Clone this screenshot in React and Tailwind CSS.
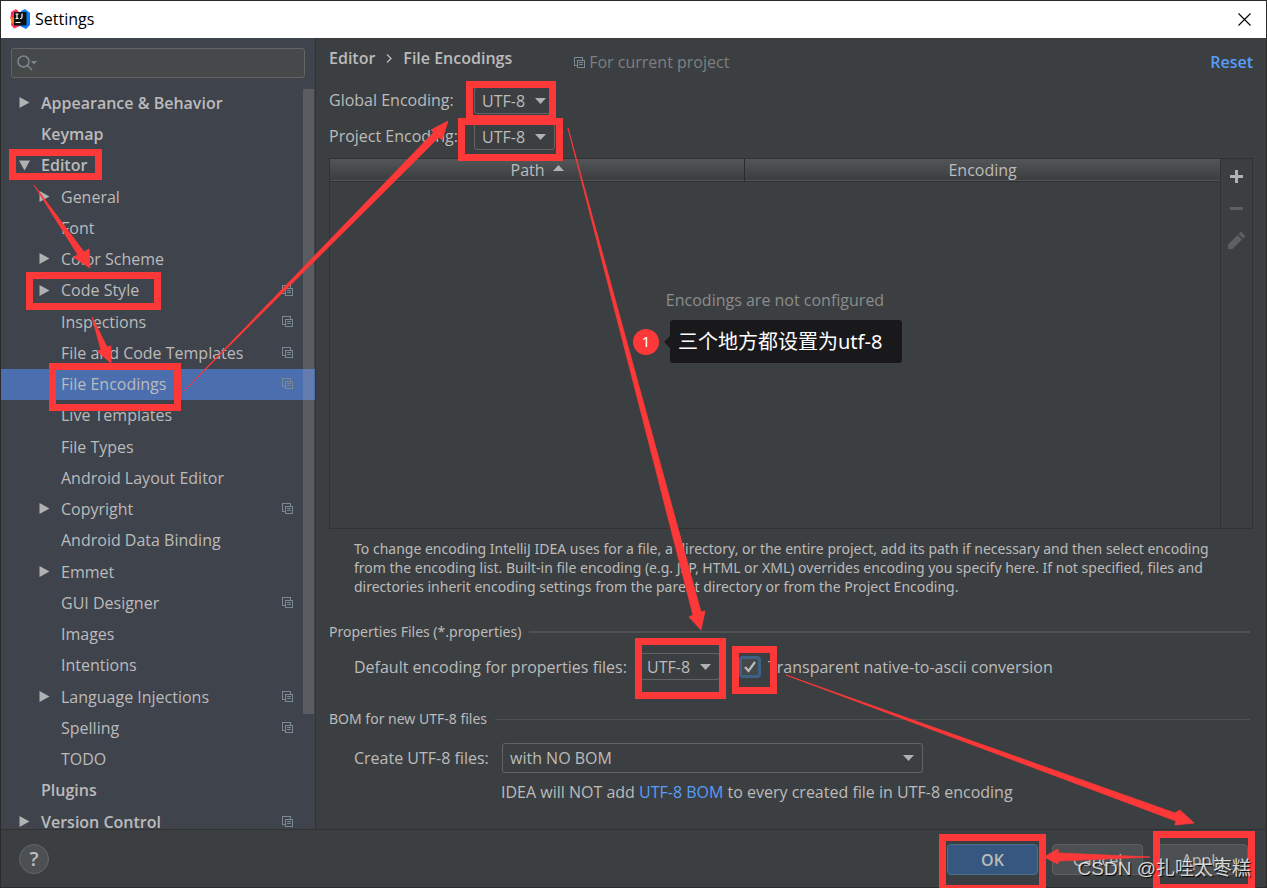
const tree = [
  { label: 'Appearance & Behavior', top: true, arrow: 'right' },
  { label: 'Keymap', top: true },
  { label: 'Editor', top: true, arrow: 'down' },
  { label: 'General', arrow: 'right' },
  { label: 'Font' },
  { label: 'Color Scheme', arrow: 'right' },
  { label: 'Code Style', arrow: 'right', project: true },
  { label: 'Inspections', project: true },
  { label: 'File and Code Templates', project: true },
  { label: 'File Encodings', project: true, selected: true },
  { label: 'Live Templates' },
  { label: 'File Types' },
  { label: 'Android Layout Editor' },
  { label: 'Copyright', arrow: 'right', project: true },
  { label: 'Android Data Binding' },
  { label: 'Emmet', arrow: 'right' },
  { label: 'GUI Designer', project: true },
  { label: 'Images' },
  { label: 'Intentions' },
  { label: 'Language Injections', arrow: 'right', project: true },
  { label: 'Spelling', project: true },
  { label: 'TODO' },
  { label: 'Plugins', top: true },
  { label: 'Version Control', top: true, arrow: 'right', project: true },
];

// x, y, width, height of the outer edge
const marks = [
  [9, 149, 93, 31],
  [26, 272, 135, 38],
  [49, 363, 132, 48],
  [466, 81, 90, 41],
  [458, 118, 105, 43],
  [635, 638, 91, 61],
  [732, 646, 45, 48],
  [939, 834, 107, 58],
  [1153, 831, 102, 60],
];

const arrows = [
  '34,185 84,252 89,249 90,268 73,257 78,255',
  '92,317 107,347 111,346 111,363 97,351 101,350',
  '184,391 434,132 431,130 448,121 442,140 439,137',
  '568,128 701,612 705,611 701,630 689,617 693,615',
  '786,675 1175,813 1180,810 1194,823 1175,825 1176,821',
  '1150,857 1058,853 1058,849 1044,857 1058,864 1058,861',
];

const ProjectIcon = () => (
  <svg className="size-[11px] shrink-0 text-[#7c8891]" viewBox="0 0 11 11" fill="none" stroke="currentColor" shapeRendering="crispEdges">
    <path d="M2.5 8.5h-2v-8h8v2" />
    <path d="M3.5 3.5h7v7h-7z" />
    <path d="M5 5.5h4M5 7.5h4" />
  </svg>
);

const IdeaLogo = () => (
  <svg className="size-5 shrink-0" viewBox="0 0 20 20">
    <path d="M1 3l5-3 4 4-2 7-4 8-3-3 1-5-1.5-2z" fill="#fe315d" />
    <path d="M0 8l4 1 2 7-4-1z" fill="#f97a12" />
    <path d="M11 2l4-2 5 4v12l-4 4-8-4z" fill="#087cfa" />
    <path d="M1 15l4-2 5 4-6 2.500z" fill="#fe315d" />
    <path d="M4 3h12.500v13.500h-12.500z" fill="#111" />
    <path d="M5.500 5h3M5.500 9.500h3M7 5v4.500M12 4.500v3.500q0 1.500-1.300 1.500H10M5.500 13.500h5" fill="none" stroke="#fff" strokeWidth="1.2" />
  </svg>
);

const Caret = ({ className = '' }) => (
  <svg className={`pointer-events-none h-[6px] w-[11px] text-[#afb1b3] ${className}`} viewBox="0 0 11 6" fill="currentColor">
    <path d="M0 0h11L5.5 6z" />
  </svg>
);

const Combo = ({ id, value, size }) => (
  <div className={`relative flex items-center rounded-[3px] border border-[#646464] ${size}`}>
    <select id={id} className="h-full w-full appearance-none bg-transparent pl-[7px] outline-none">
      <option>{value}</option>
    </select>
    <Caret className="absolute right-[8px]" />
  </div>
);

const TreeRow = ({ item }) => (
  <li className="h-[31px] shrink-0 nth-[4n+3]:h-8">
    <a
      href="#"
      className={`flex h-full items-center pr-[22px] pb-[2px] ${item.top ? 'pl-[18px] font-semibold' : 'pl-[38px]'} ${item.selected ? 'bg-[#4b6eaf]' : ''}`}
    >
      <span className="w-[22px] shrink-0">
        {item.arrow && (
          <svg className="size-[11px] text-[#afb1b3]" viewBox="0 0 11 11" fill="currentColor">
            <path d={item.arrow === 'down' ? 'M0 0.5h11L5.5 10.5z' : 'M0.5 0v11L10.5 5.5z'} />
          </svg>
        )}
      </span>
      <span className="flex-1 whitespace-nowrap">{item.label}</span>
      {item.project && <ProjectIcon />}
    </a>
  </li>
);

const Section = ({ title, line }) => (
  <div className="flex items-center gap-2 pr-[3px] font-['Noto_Sans',sans-serif] text-[14px] leading-5">
    <h2>{title}</h2>
    <div className={`flex-1 bg-[#515151] ${line}`} />
  </div>
);

const Sidebar = () => (
  <aside className="relative flex w-[315px] shrink-0 flex-col overflow-hidden border-r border-[#323438] bg-[#3f434c]">
    <div className="mx-[10px] mt-[10px] flex h-[30px] shrink-0 items-center rounded-[3px] border border-[#646464] bg-[#45494a] px-[5px]">
      <svg className="h-4 w-[21px] shrink-0" viewBox="0 0 21 16" fill="none" stroke="#7c8891" strokeWidth="1.5">
        <circle cx="6.5" cy="6.5" r="5.5" />
        <path d="M10.5 10.5l4.5 4.5" />
        <path d="M14 6h6l-3 3.5z" fill="#7c8891" stroke="none" />
      </svg>
      <input aria-label="Search settings" className="min-w-0 flex-1 bg-transparent outline-none" />
    </div>
    <ul className="mt-[10px] flex min-h-0 flex-1 flex-col overflow-hidden">
      {tree.map((item) => <TreeRow key={item.label} item={item} />)}
    </ul>
    <div className="absolute top-[51px] right-px bottom-[115px] w-[11px] bg-[#a6a6a6]/25" />
  </aside>
);

const EncodingTable = () => (
  <div className="mt-2 flex min-h-0 flex-1 border border-[#323232]">
    <div className="flex-1">
      <table className="w-full table-fixed border-collapse">
        <thead>
          <tr className="h-[22px] border-b border-[#2f3133] bg-linear-to-b from-[#535658] to-[#3b3d3f] leading-5">
            <th className="w-[46.6%] border-r border-[#2b2b2b] p-0 font-normal">
              <span className="inline-flex items-center gap-2">
                Path
                <Caret className="mb-1 rotate-180" />
              </span>
            </th>
            <th className="p-0 font-normal">Encoding</th>
          </tr>
        </thead>
      </table>
      <p className="mt-[108px] text-center leading-5 text-[#8c8c8c]">Encodings are not configured</p>
    </div>
    <div className="flex w-8 flex-col items-center gap-3 border-l border-[#323232] pt-[7px]">
      <button aria-label="Add" className="flex size-5 items-center justify-center text-[#afb1b3]">
        <svg className="size-[13px]" viewBox="0 0 13 13" fill="currentColor"><path d="M5 0h3v5h5v3H8v5H5V8H0V5h5z" /></svg>
      </button>
      <button aria-label="Remove" className="flex size-5 items-center justify-center text-[#5d5f60]">
        <svg className="size-[13px]" viewBox="0 0 13 13" fill="currentColor"><path d="M0 5h13v3H0z" /></svg>
      </button>
      <button aria-label="Edit" className="flex size-5 items-center justify-center text-[#5d5f60]">
        <svg className="size-[17px]" viewBox="0 0 17 17" fill="currentColor">
          <path d="M0 17v-4.5L9.5 3 14 7.5 4.500 17z" />
          <path d="M10.5 2L12.500 0h1L17 3.500v1L15 6.500z" />
        </svg>
      </button>
    </div>
  </div>
);

const Annotations = () => (
  <div className="pointer-events-none absolute -inset-px overflow-hidden">
    <svg className="absolute top-0 left-0" width="1267" height="888" viewBox="0 0 1267 888">
      {marks.map(([x, y, w, h]) => (
        <rect key={`${x}-${y}`} x={x + 3.5} y={y + 3.5} width={w - 7} height={h - 7} fill="none" stroke="#fc3838" strokeWidth="7" />
      ))}
      {arrows.map((points) => (
        <polygon key={points} points={points} fill="#fc3838" stroke="#fc3838" strokeWidth="0.8" strokeLinejoin="round" />
      ))}
    </svg>
    <div className="absolute top-[320px] left-[633px] flex items-center font-['Noto_Sans','Noto_Sans_CJK_SC',sans-serif]">
      <span className="flex size-[26px] items-center justify-center rounded-full bg-[#fc3838] text-[15px] text-white">1</span>
      <span className="ml-[5px] size-0 border-y-[6px] border-r-[6px] border-y-transparent border-r-[#19191b]" />
      <span className="flex h-[43px] w-[232px] items-center rounded-[3px] bg-[#19191b] pl-2 text-[20px] whitespace-nowrap text-white">
        三个地方都设置为utf-8
      </span>
    </div>
    <p className="absolute right-4 bottom-[5px] font-['Liberation_Sans','Noto_Sans_CJK_SC',sans-serif] text-[19px] leading-7 text-white/80 [text-shadow:1px_1px_1px_#000]">
      CSDN @扎哇太枣糕
    </p>
  </div>
);

const App = () => (
  <div className="relative flex h-screen flex-col border border-[#2b2b2b] bg-[#3c3f41] font-['Open_Sans','Noto_Sans_CJK_SC',sans-serif] text-[16px] text-[#bbbbbb]">
    <header className="flex h-[37px] shrink-0 items-center bg-white pr-[15px] pb-px pl-[9px] text-black">
      <IdeaLogo />
      <h1 className="ml-[5px] flex-1">Settings</h1>
      <button aria-label="Close">
        <svg className="size-[13px]" viewBox="0 0 13 13" stroke="currentColor" strokeWidth="1.1"><path d="M0.500 0.500l12 12M12.500 0.500l-12 12" /></svg>
      </button>
    </header>

    <div className="flex min-h-0 flex-1">
      <Sidebar />
      <main className="flex min-w-0 flex-1 flex-col pr-[13px] pb-[27px] pl-[13px]">
        <div className="flex h-[49px] shrink-0 items-start pt-[10px] leading-5">
          <nav className="flex items-center gap-[11px] font-semibold">
            <span>Editor</span>
            <svg className="h-[9px] w-[6px]" viewBox="0 0 6 9" fill="none" stroke="currentColor" strokeWidth="1.3"><path d="M1 0.500l4 4-4 4" /></svg>
            <span>File Encodings</span>
          </nav>
          <p className="mt-1 ml-[62px] flex flex-1 items-center gap-1 text-[#7d7f80]">
            <ProjectIcon />
            For current project
          </p>
          <a href="#" className="mt-1 font-semibold text-[#589df6]">Reset</a>
        </div>

        <div className="grid shrink-0 grid-cols-[145px_81px] gap-y-[9px]">
          <label htmlFor="global" className="leading-[26px] whitespace-nowrap">Global Encoding:</label>
          <Combo id="global" value="UTF-8" size="h-[27px]" />
          <label htmlFor="project" className="leading-[26px] whitespace-nowrap">Project Encoding:</label>
          <Combo id="project" value="UTF-8" size="h-[27px]" />
        </div>

        <EncodingTable />

        <p className="mt-[10px] ml-[25px] font-['Noto_Sans',sans-serif] text-[14px] leading-[19px] whitespace-nowrap">
          To change encoding IntelliJ IDEA uses for a file, a directory, or the entire project, add its path if necessary and then select encoding
          <br />
          from the encoding list. Built-in file encoding (e.g. JSP, HTML or XML) overrides encoding you specify here. If not specified, files and
          <br />
          directories inherit encoding settings from the parent directory or from the Project Encoding.
        </p>

        <section className="mt-[26px]">
          <Section title="Properties Files (*.properties)" line="h-[2px]" />
          <div className="mt-[11px] ml-[25px] flex h-[27px] items-center">
            <label htmlFor="properties" className="w-[285px]">Default encoding for properties files:</label>
            <Combo id="properties" value="UTF-8" size="h-[27px] w-[81px]" />
            <label className="ml-[19px] flex items-center gap-[7px]">
              <span className="relative flex size-[22px] items-center justify-center rounded-[4px] border-3 border-[#3d6185] bg-[#43494a]">
                <input type="checkbox" defaultChecked className="absolute inset-0 appearance-none" />
                <svg className="pointer-events-none size-3" viewBox="0 0 12 12" fill="none" stroke="#bbbbbb" strokeWidth="2.2"><path d="M1 6l3.500 4L11 1" /></svg>
              </span>
              Transparent native-to-ascii conversion
            </label>
          </div>
        </section>

        <section className="mt-[29px]">
          <Section title="BOM for new UTF-8 files" line="h-px" />
          <div className="mt-[14px] ml-[25px] flex items-center">
            <label htmlFor="bom" className="w-[148px]">Create UTF-8 files:</label>
            <Combo id="bom" value="with NO BOM" size="h-[30px] w-[421px]" />
          </div>
          <p className="mt-[9px] ml-[172px] leading-5">
            IDEA will NOT add <a href="#" className="text-[#589df6]">UTF-8 BOM</a> to every created file in UTF-8 encoding
          </p>
        </section>
      </main>
    </div>

    <footer className="flex h-[58px] shrink-0 items-start gap-[14px] border-t border-[#323232] pt-[14px] pr-[18px] pl-[18px]">
      <button aria-label="Help" className="mr-auto flex size-[30px] items-center justify-center rounded-full border border-[#646667] bg-[#4c5052] text-[20px] font-semibold">?</button>
      <button className="h-[31px] w-[91px] rounded-[4px] border border-[#4c708c] bg-[#365880] font-semibold">OK</button>
      <button className="h-[31px] w-[91px] rounded-[4px] border border-[#5e6060] bg-[#4c5052]">Cancel</button>
      <button className="h-[31px] w-[91px] rounded-[4px] border border-[#5e6060] bg-[#4c5052]">Apply</button>
    </footer>

    <Annotations />
  </div>
);

export default App;
